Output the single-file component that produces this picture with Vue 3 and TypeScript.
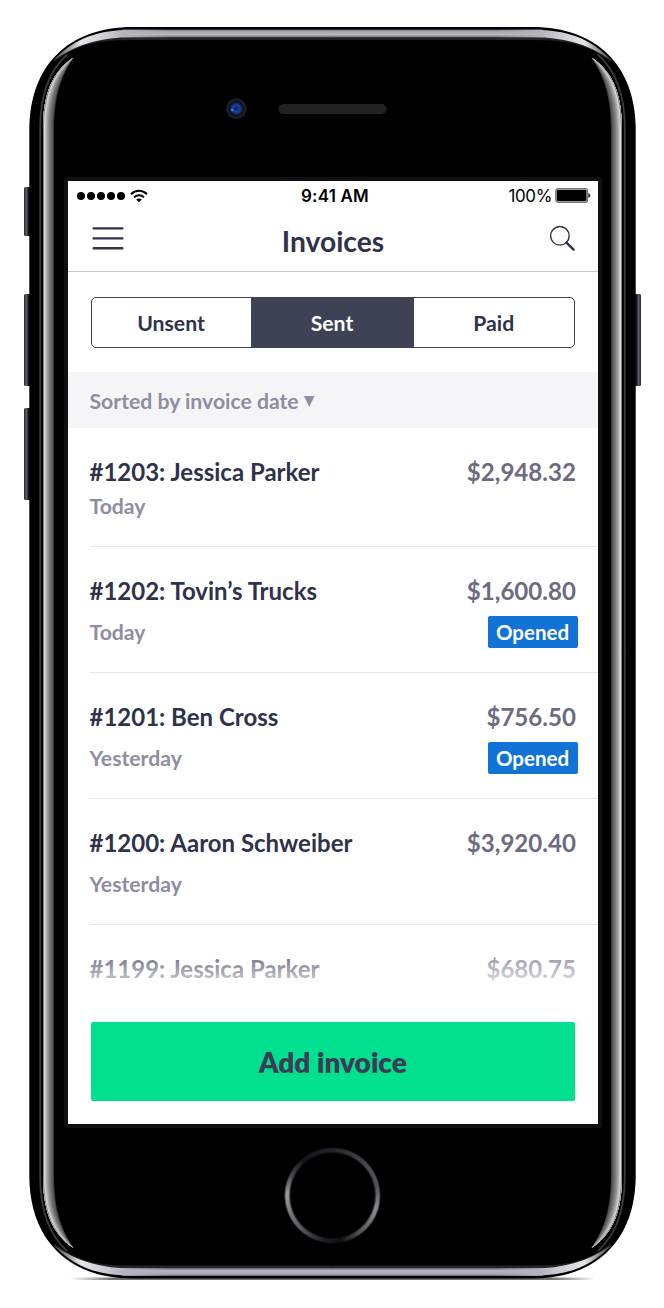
<script setup lang="ts">
interface Invoice {
  id: number
  client: string
  date: string
  amount: string
  opened?: boolean
}

interface Layer {
  d: string
  fill: string
}

const tabs: string[] = ['Unsent', 'Sent', 'Paid']
const activeTab = 'Sent'

const invoices: Invoice[] = [
  { id: 1203, client: 'Jessica Parker', date: 'Today', amount: '$2,948.32' },
  { id: 1202, client: 'Tovin’s Trucks', date: 'Today', amount: '$1,600.80', opened: true },
  { id: 1201, client: 'Ben Cross', date: 'Yesterday', amount: '$756.50', opened: true },
  { id: 1200, client: 'Aaron Schweiber', date: 'Yesterday', amount: '$3,920.40' },
  { id: 1199, client: 'Jessica Parker', date: 'Yesterday', amount: '$680.75' },
]

// Nested slivers that shade the curved glass edge, from the innermost tone outwards.
const tones: string[] = ['#3c3c3c', '#575757', '#626262', '#6e6e6e', '#7d7d7d', '#8c8c8c', '#9c9c9c', '#b0b0b0', '#c4c4c4', '#dadada', '#808080']
const glass: Layer[] = tones.map((fill, i) => {
  const t = (tones.length - i) / tones.length
  const x = 43 + 11 * t
  return {
    fill,
    d: `M43 653.5V130C43 94 52 72 73.5 57.5C${52 + 8 * t} ${72 + 6 * t} ${x} ${94 + 4 * t} ${x} ${130 + 2 * t}V653.5Z`,
  }
})
</script>

<template>
  <div class="stage">
    <svg class="device" width="664" height="1308" viewBox="0 0 664 1308" aria-hidden="true">
      <defs>
        <linearGradient id="edge" gradientUnits="userSpaceOnUse" x1="0" y1="29" x2="0" y2="38">
          <stop offset="0" stop-color="#4a4a50" />
          <stop offset="0.25" stop-color="#a4a4ad" />
          <stop offset="0.65" stop-color="#b9b9c4" />
          <stop offset="1" stop-color="#4a4a50" />
        </linearGradient>
        <linearGradient id="corner" gradientUnits="userSpaceOnUse" x1="54" y1="60" x2="170" y2="34">
          <stop offset="0" stop-color="#fff" stop-opacity="0.15" />
          <stop offset="0.25" stop-color="#e6e6ea" />
          <stop offset="0.5" stop-color="#c8c8d0" />
          <stop offset="0.62" stop-color="#b4b4be" />
          <stop offset="1" stop-color="#b4b4be" stop-opacity="0" />
        </linearGradient>
        <linearGradient id="key" x1="0" y1="0" x2="1" y2="0">
          <stop offset="0" stop-color="#25272c" />
          <stop offset="0.3" stop-color="#5b5f66" />
          <stop offset="0.55" stop-color="#16191f" />
          <stop offset="1" stop-color="#05070b" />
        </linearGradient>
        <linearGradient id="shade" x1="0" y1="0" x2="1" y2="0">
          <stop offset="0" stop-color="#000" stop-opacity="0" />
          <stop offset="0.08" stop-color="#000" stop-opacity="0.55" />
          <stop offset="0.92" stop-color="#000" stop-opacity="0.55" />
          <stop offset="1" stop-color="#000" stop-opacity="0" />
        </linearGradient>
        <radialGradient id="lens">
          <stop offset="0" stop-color="#0a1a55" />
          <stop offset="0.3" stop-color="#1b429c" />
          <stop offset="0.52" stop-color="#102455" />
          <stop offset="0.64" stop-color="#0d0f14" />
          <stop offset="0.82" stop-color="#22252b" />
          <stop offset="1" stop-color="#000" />
        </radialGradient>
        <g id="quarter">
          <path d="M40.200 653.500V128C40.200 92 50 70 67 54.500" fill="none" stroke="#3a3a3a" stroke-width="1.800" />
          <path v-for="layer in glass" :key="layer.fill" :d="layer.d" :fill="layer.fill" />
          <path d="M54 60.500C76 43 98 38.600 130 38.600H332.500" fill="none" stroke="#242426" stroke-width="2.600" />
          <path d="M122 29.400H333V37.400H122Z" fill="url(#edge)" />
          <path d="M54 60C74 38 100 29.800 131 29.800H170V37.200H131C104 37.200 78 43 54 60Z" fill="url(#corner)" />
        </g>
        <g id="half">
          <use href="#quarter" />
          <use href="#quarter" transform="translate(0 1305.500) scale(1 -1)" />
        </g>
      </defs>

      <rect x="70" y="1277.500" width="525" height="2.500" fill="url(#shade)" />
      <rect x="24" y="187" width="8" height="49" rx="1.500" fill="url(#key)" />
      <rect x="24" y="294" width="8" height="92" rx="1.500" fill="url(#key)" />
      <rect x="24" y="408" width="8" height="92" rx="1.500" fill="url(#key)" />
      <rect x="24" y="294" width="8" height="92" rx="1.500" fill="url(#key)" transform="translate(665 0) scale(-1 1)" />
      <path
        d="M29.300 130C29.300 66 68 27 133 27H532C597 27 635.700 66 635.700 130V1175.500C635.700 1239.500 597 1278.500 532 1278.500H133C68 1278.500 29.300 1239.500 29.300 1175.500Z"
        fill="#000"
      />
      <use href="#half" />
      <use href="#half" transform="translate(665 0) scale(-1 1)" />

      <circle cx="236.300" cy="108.700" r="11" fill="url(#lens)" />
      <circle cx="232.300" cy="110" r="1.300" fill="#3d83d8" />
      <rect x="278.500" y="104" width="108" height="10" rx="5" fill="#222" />
      <rect x="64" y="177" width="538" height="951" rx="3" fill="#101010" />
    </svg>

    <main class="screen">
      <div class="status">
        <div class="signal">
          <i v-for="n in 5" :key="n" class="dot"></i>
          <svg class="wifi" width="18" height="14" viewBox="0 0 18 14" fill="none" stroke="#000">
            <path d="M1 5.200C5.500 0.700 12.500 0.700 17 5.200" stroke-width="2" />
            <path d="M4 8.400C6.800 5.600 11.200 5.600 14 8.400" stroke-width="1.900" />
            <path d="M9 13.300L6.200 10.600C7.800 9.200 10.200 9.200 11.800 10.600Z" fill="#000" stroke="none" />
          </svg>
        </div>
        <div class="clock">9:41 AM</div>
        <div class="power">
          <span>100%</span>
          <svg width="36" height="15" viewBox="0 0 36 15">
            <rect x="0.700" y="0.700" width="31.800" height="13.600" rx="2.600" fill="#aaa" stroke="#777" stroke-width="1.200" />
            <rect x="1.900" y="1.900" width="29.400" height="11.200" rx="1.300" fill="#000" />
            <path d="M33.300 5.200C36 5.800 36 9.200 33.300 9.800Z" fill="#222" />
          </svg>
        </div>
      </div>

      <header class="header">
        <svg class="menu" width="32" height="24" viewBox="0 0 32 24" stroke="#2f324b" stroke-width="2.400" stroke-linecap="round">
          <path d="M1.700 2.400H30.300M1.700 12.400H30.300M1.700 22.200H30.300" />
        </svg>
        <h1>Invoices</h1>
        <svg class="search" width="26" height="26" viewBox="0 0 26 26" fill="none" stroke="#2f324b">
          <circle cx="9.900" cy="10.800" r="9.300" stroke-width="1.400" />
          <path d="M16.400 17.600L23.600 24.600" stroke-width="2.400" stroke-linecap="round" />
        </svg>
      </header>

      <div class="tabs">
        <div v-for="tab in tabs" :key="tab" class="tab" :class="{ active: tab === activeTab }">{{ tab }}</div>
      </div>

      <div class="sort">
        <span>Sorted by invoice date</span>
        <svg width="11" height="14" viewBox="0 0 11 14"><path d="M0 2H10.500L5.250 13Z" fill="#8e8da1" /></svg>
      </div>

      <section class="list">
        <article v-for="(invoice, i) in invoices" :key="invoice.id" class="row" :class="{ compact: i === 0 }">
          <div class="line">
            <span class="name">#{{ invoice.id }}: {{ invoice.client }}</span>
            <span class="amount">{{ invoice.amount }}</span>
          </div>
          <div class="line meta">
            <span class="date">{{ invoice.date }}</span>
            <span v-if="invoice.opened" class="badge">Opened</span>
          </div>
        </article>
        <div class="fade"></div>
      </section>

      <footer class="footer">
        <button class="add" type="button">Add invoice</button>
      </footer>
    </main>

    <div class="home"></div>
  </div>
</template>

<style>
body {
  background: #fff;
}
</style>

<style scoped>
.stage {
  position: relative;
  box-sizing: border-box;
  width: 664px;
  height: 1308px;
  padding-top: 181px;
  overflow: hidden;
  font-family: Lato, sans-serif;
}
.device {
  position: absolute;
  inset: 0;
}
.screen {
  position: relative;
  display: flex;
  flex-direction: column;
  width: 530px;
  height: 943px;
  margin-left: 68px;
  background: #fff;
  color: #2f324b;
}
.status {
  display: grid;
  grid-template-columns: 1fr auto 1fr;
  align-items: center;
  height: 29px;
  padding: 0 7px 0 9px;
  box-sizing: border-box;
  color: #000;
  font-family: Inter, sans-serif;
  font-size: 17px;
}
.signal {
  display: flex;
  align-items: center;
  gap: 2px;
}
.dot {
  width: 8px;
  height: 8px;
  border-radius: 50%;
  background: #000;
}
.wifi {
  margin-left: 3px;
}
.clock {
  margin-left: 2px;
  font-weight: 600;
  letter-spacing: 0.200px;
}
.power {
  display: flex;
  justify-content: flex-end;
  align-items: center;
  gap: 3px;
  letter-spacing: -0.400px;
}
.header {
  display: grid;
  grid-template-columns: 1fr auto 1fr;
  align-items: center;
  height: 62px;
  padding: 0 22px 6px 24px;
  box-sizing: border-box;
  border-bottom: 1px solid #c6c6ca;
}
.search {
  justify-self: end;
}
h1 {
  margin: 6px 2px 0 0;
  font-size: 28.200px;
  line-height: 34px;
  font-weight: 700;
}
.tabs {
  display: flex;
  height: 51px;
  margin: 25px 23px 24px 22.500px;
  box-sizing: border-box;
  border: 1.500px solid #3f4154;
  border-radius: 5px;
  overflow: hidden;
}
.tab {
  flex: 1;
  display: flex;
  align-items: center;
  justify-content: center;
  padding-top: 1px;
  font-size: 21.200px;
  line-height: 26px;
  font-weight: 700;
}
.tab:first-child {
  flex: none;
  width: 159px;
}
.tab.active {
  flex: none;
  width: 163px;
  background: #3f4154;
  color: #fff;
}
.sort {
  display: flex;
  align-items: center;
  gap: 5px;
  height: 56px;
  padding: 2px 21.500px 0;
  box-sizing: border-box;
  background: #f5f5f8;
  color: #8e8da1;
  font-size: 21.200px;
  line-height: 26px;
  font-weight: 700;
}
.list {
  position: relative;
  flex: 1;
  overflow: hidden;
}
.row {
  height: 126px;
  margin-left: 21.500px;
  padding: 27px 21.500px 0 0;
  box-sizing: border-box;
  border-bottom: 1px solid #e8e8ea;
}
.row.compact {
  height: 119px;
}
.line {
  display: flex;
  justify-content: space-between;
  align-items: center;
  height: 32px;
}
.meta {
  margin-top: 10px;
  margin-right: -1px;
}
.compact .meta {
  margin-top: 3px;
}
.name {
  font-size: 24px;
  font-weight: 700;
}
.amount {
  margin-right: 0.500px;
  color: #6c6b80;
  font-size: 24.100px;
  font-weight: 700;
}
.date {
  color: #8e8da1;
  font-size: 21.200px;
  line-height: 26px;
  font-weight: 700;
}
.badge {
  width: 90px;
  height: 32px;
  border-radius: 2px;
  background: #1273d6;
  color: #fff;
  font-size: 20.500px;
  line-height: 32px;
  font-weight: 700;
  text-align: center;
}
.fade {
  position: absolute;
  inset: auto 0 0;
  height: 86px;
  background: linear-gradient(rgba(255, 255, 255, 0), #fff 72%);
}
.footer {
  padding: 0 23px 23px 22.500px;
}
.add {
  display: block;
  width: 100%;
  height: 79px;
  padding: 0;
  border: 0;
  border-radius: 2px;
  background: #00e08f;
  color: #3a3d55;
  font: 800 28px Lato, sans-serif;
}
.home {
  position: absolute;
  left: 284px;
  top: 1147px;
  width: 97px;
  height: 97px;
  border-radius: 50%;
  background:
    radial-gradient(circle closest-side, #000 86%, transparent 91%, transparent 96%, #000 100%),
    conic-gradient(#24242a, #4a4a50 50deg, #55555b 80deg, #8c8c92 108deg, #5a5a60 140deg, #121216 170deg, #1c1c22 190deg, #5c5c62 225deg, #9a9aa0 272deg, #4a4a50 295deg, #131318 320deg, #24242a);
}
</style>
